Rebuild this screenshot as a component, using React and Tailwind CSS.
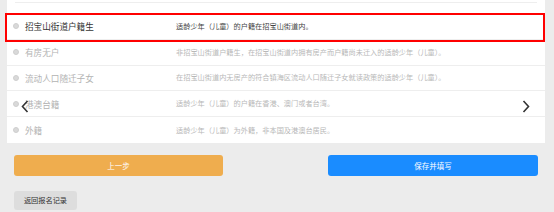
import React from "react";

const rows = [
  { label: "招宝山街道户籍生", desc: "适龄少年（儿童）的户籍在招宝山街道内。", active: true },
  { label: "有房无户", desc: "非招宝山街道户籍生，在招宝山街道内拥有房产而户籍尚未迁入的适龄少年（儿童）。" },
  { label: "流动人口随迁子女", desc: "在招宝山街道内无房产的符合镇海区流动人口随迁子女就读政策的适龄少年（儿童）。" },
  { label: "港澳台籍", desc: "适龄少年（儿童）的户籍在香港、澳门或者台湾。" },
  { label: "外籍", desc: "适龄少年（儿童）为外籍，非本国及港澳台居民。" },
];

export default function App() {
  return (
    <div
      className="relative w-[554px] h-[212px] bg-[#ececec] overflow-hidden"
      style={{ fontFamily: '"Noto Sans CJK SC", "Noto Sans", sans-serif' }}
    >
      <div className="ml-[7px] w-[538px] h-[143px] bg-white flex flex-col">
        <div className="h-[2px]" />
        <div className="mx-2 h-px bg-[#eeeeee]" />
        <div className="h-[11px]" />
        {rows.map((r, i) => (
          <div
            key={i}
            className={`h-[26px] flex items-center ${i < rows.length - 1 ? "border-b border-[#eeeeee]" : ""}`}
          >
            <div className="w-[12px] flex justify-end">
              <span className="w-[6px] h-[6px] rounded-full bg-[#d9d9d9] border border-[#cfcfcf]" />
            </div>
            <span
              className={`ml-[6px] w-[151px] text-[8.6px] leading-none ${r.active ? "text-[#333333]" : "text-[#b3b3b3]"}`}
            >
              {r.label}
            </span>
            <span
              className={`text-[7.2px] leading-none whitespace-nowrap ${r.active ? "text-[#444444]" : "text-[#b8b8b8]"}`}
            >
              {r.desc}
            </span>
          </div>
        ))}
      </div>

      <div className="mt-[12px] flex px-[14px] pr-[16px] justify-between">
        <button className="w-[209px] h-[21px] rounded-[3px] bg-[#efad4e] text-white text-[7.5px] leading-none">
          上一步
        </button>
        <button className="w-[210px] h-[21px] rounded-[3px] bg-[#1a8cff] text-white text-[7.5px] leading-none">
          保存并填写
        </button>
      </div>
      <div className="mt-[8px] px-[14px]">
        <button className="w-[63px] h-[19px] rounded-[3px] bg-[#dddddd] text-[#333333] text-[7.2px] leading-none">
          返回报名记录
        </button>
      </div>

      {/* highlight frame */}
      <div className="absolute left-[5px] top-[13px] w-[540px] h-[29px] border-2 border-[#ff0000]" />

      {/* carousel arrows */}
      <svg className="absolute left-[21px] top-[100px]" width="8" height="13" viewBox="0 0 8 13">
        <path d="M6.5 1 L1.5 6.5 L6.5 12" fill="none" stroke="#333" strokeWidth="1.6" />
      </svg>
      <svg className="absolute left-[522px] top-[100px]" width="8" height="13" viewBox="0 0 8 13">
        <path d="M1.5 1 L6.5 6.5 L1.5 12" fill="none" stroke="#333" strokeWidth="1.6" />
      </svg>
    </div>
  );
}
